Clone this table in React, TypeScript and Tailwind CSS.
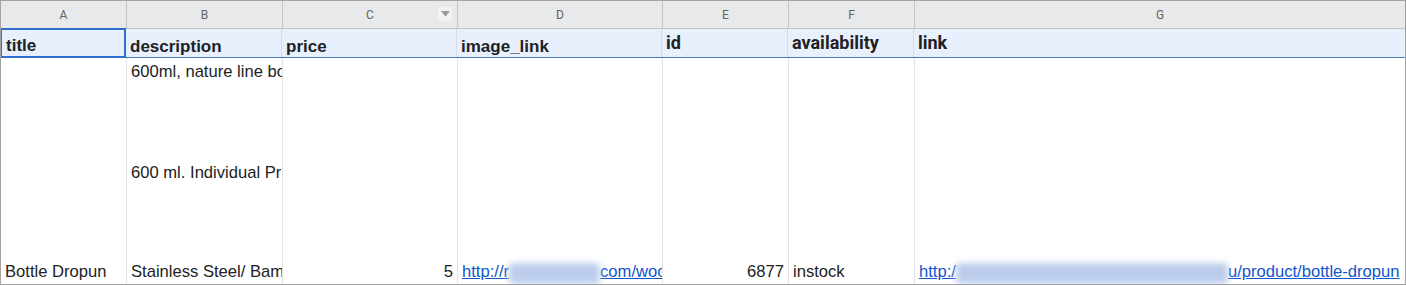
import React from "react";

const cols = [
  { letter: "A", w: "w-[126px]" },
  { letter: "B", w: "w-[156px]" },
  { letter: "C", w: "w-[175px]" },
  { letter: "D", w: "w-[205px]" },
  { letter: "E", w: "w-[126px]" },
  { letter: "F", w: "w-[126px]" },
  { letter: "G", w: "w-[490px]" },
];

const arial = "font-['Liberation_Sans',Arial,sans-serif]";
const roboto = "font-['Roboto','Liberation_Sans',sans-serif]";

function Blur({ w }: { w: string }) {
  return (
    <span className={`relative inline-block ${w} h-[16px] align-[-3px]`}>
      <span className="absolute inset-x-0 -top-[1px] -bottom-[4px] bg-[#bccdec] blur-[3px] rounded-sm" />
    </span>
  );
}

export default function App() {
  return (
    <div className="w-[1406px] h-[285px] bg-white">
      <div className="w-[1406px] h-[285px] border border-[#a3a3a3] flex flex-col overflow-hidden">
        {/* column letters */}
        <div className="flex h-[28px] bg-[#e8e9eb] border-b border-[#c4c4c4] shrink-0">
          {cols.map((c, i) => (
            <div
              key={c.letter}
              className={`${c.w} shrink-0 relative flex items-center justify-center text-[12px] text-[#5f6368] ${roboto} ${i < cols.length - 1 ? "border-r border-[#c4c4c4]" : ""}`}
            >
              {c.letter}
              {c.letter === "C" && (
                <div className="absolute right-[5px] top-[6px] w-[14px] h-[14px] bg-[#f3f3f4] flex items-center justify-center">
                  <svg width="9" height="6" viewBox="0 0 9 6">
                    <path d="M0 0 H9 L4.5 5.5 Z" fill="#9a9a9a" />
                  </svg>
                </div>
              )}
            </div>
          ))}
        </div>
        {/* header row */}
        <div className="flex h-[29px] bg-[#e8f0fd] border-b-[1.5px] border-[#4a78b8] shrink-0 font-bold text-[#202124] leading-[20px]">
          <div className={`w-[126px] shrink-0 border-2 border-[#2f6fd0] -mt-[1px] -ml-[1px] -mb-[1px] pl-[4px] flex items-end pb-0 text-[17px] ${arial}`}>
            title
          </div>
          <div className={`w-[156px] shrink-0 border-r border-[#d6dce6] pl-[4px] flex items-end pb-0 text-[17px] ${arial}`}>
            description
          </div>
          <div className={`w-[175px] shrink-0 border-r border-[#d6dce6] pl-[4px] flex items-end pb-0 text-[17px] ${arial}`}>
            price
          </div>
          <div className={`w-[205px] shrink-0 border-r border-[#d6dce6] pl-[4px] flex items-end pb-0 text-[17px] ${arial}`}>
            image_link
          </div>
          <div className={`w-[126px] shrink-0 border-r border-[#d6dce6] pl-[4px] flex items-end pb-[4px] text-[18px] ${roboto}`}>
            id
          </div>
          <div className={`w-[126px] shrink-0 border-r border-[#d6dce6] pl-[4px] flex items-end pb-[4px] text-[18px] ${roboto}`}>
            availability
          </div>
          <div className={`w-[490px] shrink-0 pl-[4px] flex items-end pb-[4px] text-[18px] ${roboto}`}>
            link
          </div>
        </div>
        {/* data row */}
        <div className={`flex flex-1 text-[16.6px] text-[#222] ${arial} leading-[19px]`}>
          <div className="w-[126px] shrink-0 border-r border-[#e2e2e2] pl-[4px] flex items-end pb-[3px] whitespace-nowrap overflow-hidden">
            Bottle Dropun
          </div>
          <div className="w-[156px] shrink-0 border-r border-[#e2e2e2] pl-[4px] flex flex-col justify-between pt-[4px] pb-[3px] whitespace-nowrap overflow-hidden">
            <div>600ml, nature line bo</div>
            <div className="mt-[2px]">600 ml. Individual Pr</div>
            <div>Stainless Steel/ Bam</div>
          </div>
          <div className="w-[175px] shrink-0 border-r border-[#e2e2e2] pr-[4px] flex items-end justify-end pb-[3px]">
            5
          </div>
          <div className="w-[205px] shrink-0 border-r border-[#e2e2e2] pl-[4px] flex items-end pb-[3px] whitespace-nowrap overflow-hidden">
            <span className="text-[#1155cc] underline">
              http://r<Blur w="w-[91px]" />com/woo
            </span>
          </div>
          <div className="w-[126px] shrink-0 border-r border-[#e2e2e2] pr-[4px] flex items-end justify-end pb-[3px]">
            6877
          </div>
          <div className="w-[126px] shrink-0 border-r border-[#e2e2e2] pl-[4px] flex items-end pb-[3px]">
            instock
          </div>
          <div className="w-[490px] shrink-0 pl-[4px] flex items-end pb-[3px] whitespace-nowrap overflow-hidden">
            <span className="text-[#1155cc] underline">
              http:/<Blur w="w-[272px]" />u/product/bottle-dropun
            </span>
          </div>
        </div>
      </div>
    </div>
  );
}
